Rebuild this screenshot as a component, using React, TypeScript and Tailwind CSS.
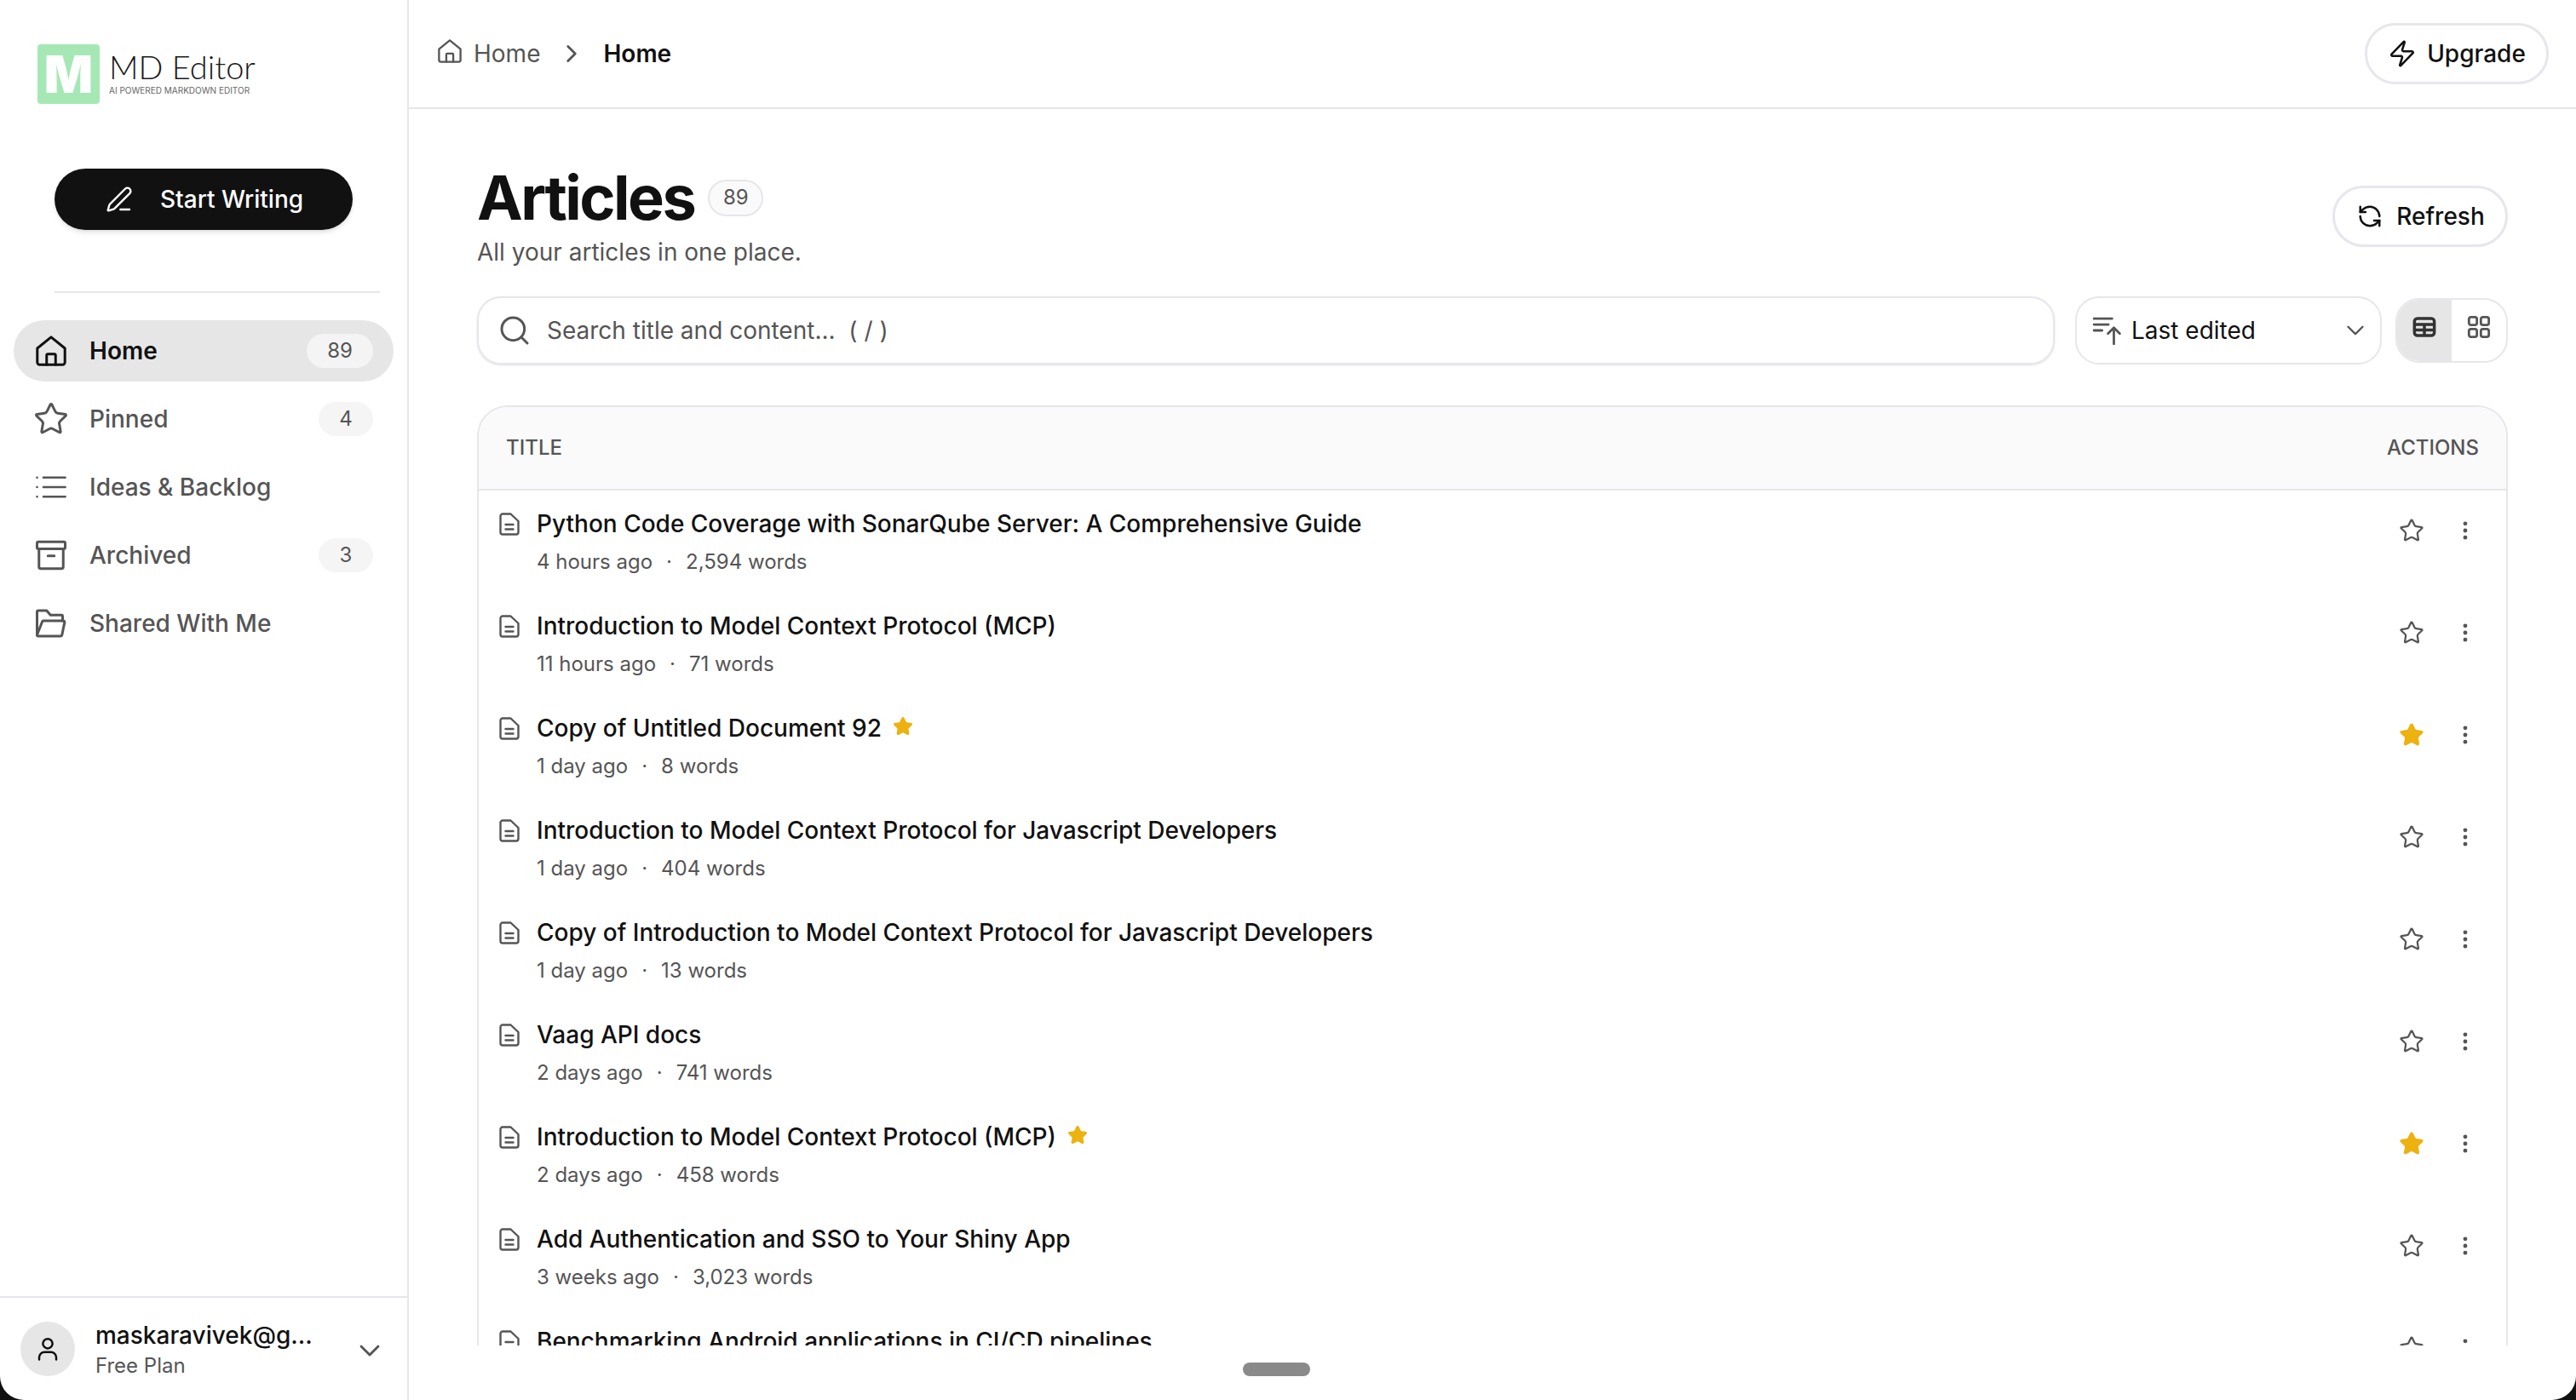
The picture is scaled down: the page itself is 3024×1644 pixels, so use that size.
import React from 'react';
import { ChevronDown, ChevronRight, EllipsisVertical, PenLine, RefreshCcw, Search, Star, Zap } from 'lucide-react';

interface Article {
  title: string;
  age?: string;
  words?: string;
  pinned?: boolean;
}

const articles: Article[] = [
  { title: 'Python Code Coverage with SonarQube Server: A Comprehensive Guide', age: '4 hours ago', words: '2,594 words' },
  { title: 'Introduction to Model Context Protocol (MCP)', age: '11 hours ago', words: '71 words' },
  { title: 'Copy of Untitled Document 92', age: '1 day ago', words: '8 words', pinned: true },
  { title: 'Introduction to Model Context Protocol for Javascript Developers', age: '1 day ago', words: '404 words' },
  { title: 'Copy of Introduction to Model Context Protocol for Javascript Developers', age: '1 day ago', words: '13 words' },
  { title: 'Vaag API docs', age: '2 days ago', words: '741 words' },
  { title: 'Introduction to Model Context Protocol (MCP)', age: '2 days ago', words: '458 words', pinned: true },
  { title: 'Add Authentication and SSO to Your Shiny App', age: '3 weeks ago', words: '3,023 words' },
  // cut off by the scroll area, only the title shows
  { title: 'Benchmarking Android applications in CI/CD pipelines' },
];

type IconProps = { className?: string };

const stroke = {
  fill: 'none',
  stroke: 'currentColor',
  strokeLinecap: 'round' as const,
  strokeLinejoin: 'round' as const,
};

const HomeIcon = ({ className }: IconProps) => (
  <svg viewBox="0 0 24 24" className={className} {...stroke} strokeWidth={2}>
    <path d="M1.2 10 12 1.2 22.8 10v11a1.8 1.8 0 0 1-1.8 1.8H3A1.8 1.8 0 0 1 1.2 21z" />
    <path d="M8.5 22.8v-7.3a1 1 0 0 1 1-1h5a1 1 0 0 1 1 1v7.3" />
  </svg>
);

const ListIcon = ({ className }: IconProps) => (
  <svg viewBox="0 0 24 24" className={className} {...stroke} strokeWidth={1.8}>
    <path d="M6 4.5h17M6 12h17M6 19.5h17M1 4.5h.01M1 12h.01M1 19.5h.01" />
  </svg>
);

const ArchiveIcon = ({ className }: IconProps) => (
  <svg viewBox="0 0 24 24" className={className} {...stroke} strokeWidth={2}>
    <rect x="1" y="1.5" width="22" height="5.5" rx="1" />
    <path d="M2.5 7v14a1.5 1.5 0 0 0 1.5 1.5h16a1.5 1.5 0 0 0 1.5-1.5V7M9.5 12.5h5" />
  </svg>
);

const FolderIcon = ({ className }: IconProps) => (
  <svg viewBox="0 0 24 24" className={className} {...stroke} strokeWidth={2}>
    <path d="M1 21V3a1 1 0 0 1 1-1h6.5l3 3.5H20a1 1 0 0 1 1 1V10" />
    <path d="M1 21a1 1 0 0 0 1 1h17.5a1 1 0 0 0 1-.8l2-9.8a1 1 0 0 0-1-1.4H6a1 1 0 0 0-1 .8z" />
  </svg>
);

const DocIcon = ({ className }: IconProps) => (
  <svg viewBox="0 0 24 27" className={className} {...stroke} strokeWidth={2.4}>
    <path d="M1.5 4a2.5 2.5 0 0 1 2.5-2.5h9.5L22.5 10v13a2.5 2.5 0 0 1-2.5 2.5H4A2.5 2.5 0 0 1 1.5 23z" />
    <path d="M7.5 14h9M7.5 19.5h9" />
  </svg>
);

const UserIcon = ({ className }: IconProps) => (
  <svg viewBox="0 0 24 24" className={className} {...stroke} strokeWidth={2}>
    <circle cx="12" cy="7" r="4.5" />
    <path d="M4 22v-2a5 5 0 0 1 5-5h6a5 5 0 0 1 5 5v2" />
  </svg>
);

const SortIcon = ({ className }: IconProps) => (
  <svg viewBox="0 0 32 32" className={className} {...stroke} strokeWidth={2.6}>
    <path d="M2 3h20M2 9.5h16M2 16h9M24 31V13M17.5 19.5 24 13l6.5 6.5" />
  </svg>
);

const TableIcon = ({ className }: IconProps) => (
  <svg viewBox="0 0 24 24" className={className} fill="none" stroke="currentColor" strokeWidth={3} strokeLinejoin="round">
    <rect x="2" y="3.5" width="20" height="17" rx="3" />
    <path d="M2 9.5h20M2 15h20M12 9.5V20" />
  </svg>
);

const GridIcon = ({ className }: IconProps) => (
  <svg viewBox="0 0 24 24" className={className} fill="none" stroke="currentColor" strokeWidth={2.4}>
    <rect x="2" y="2" width="8" height="8" rx="2" />
    <rect x="14" y="2" width="8" height="8" rx="2" />
    <rect x="2" y="14" width="8" height="8" rx="2" />
    <rect x="14" y="14" width="8" height="8" rx="2" />
  </svg>
);

const NavItem = ({ icon, label, count, active }: { icon: React.ReactNode; label: string; count?: number; active?: boolean }) => (
  <div className={`flex items-center h-[72px] rounded-full pl-[26px] pr-[24px] ${active ? 'bg-[#e6e6e6] text-[#111] font-semibold' : 'text-[#555] font-medium'}`}>
    <span className="w-[36px] h-[36px] shrink-0 flex items-center justify-center">{icon}</span>
    <span className="ml-[27px] text-[28px] flex-1">{label}</span>
    {count !== undefined && (
      <span className={`h-[40px] rounded-full flex items-center justify-center text-[24px] font-normal text-[#555] ${active ? 'w-[78px] bg-[#f4f4f4]' : 'w-[64px] bg-[#f5f5f5]'}`}>
        {count}
      </span>
    )}
  </div>
);

const ArticleRow = ({ article }: { article: Article }) => (
  <div className="h-[120px] shrink-0 flex pl-[24px] pr-[34px]">
    <DocIcon className="w-[24px] h-[27px] mt-[26px] text-[#555] shrink-0" />
    <div className="ml-[20px] flex-1 pt-[21px]">
      <div className="flex items-center h-[36px] text-[28px] font-medium text-[#111]">
        {article.title}
        {article.pinned && <Star className="w-[24px] h-[24px] ml-[13px] mb-[4px] text-[#edb20f] fill-[#edb20f]" />}
      </div>
      {article.age && (
        <div className="mt-[12px] text-[24px] leading-[30px] text-[#555]">
          {article.age}
          <span className="mx-[16px]">·</span>
          {article.words}
        </div>
      )}
    </div>
    <div className="flex items-center gap-[34px] h-[94px]">
      <Star className={`w-[30px] h-[30px] ${article.pinned ? 'text-[#edb20f] fill-[#edb20f]' : 'text-[#555]'}`} strokeWidth={1.8} />
      <EllipsisVertical className="w-[28px] h-[28px] text-[#555]" strokeWidth={2.2} />
    </div>
  </div>
);

export default function App() {
  return (
    <div className="w-[3024px] h-[1644px] bg-[#111] overflow-hidden [font-family:Inter,sans-serif]">
      <div className="relative w-full h-full bg-white rounded-b-[28px] flex overflow-hidden">
        <aside className="w-[480px] shrink-0 h-full border-r-2 border-[#e6e6ec] flex flex-col">
          <div className="h-[198px] shrink-0 pl-[44px] pt-[52px] flex items-start">
            <div className="w-[73px] h-[70px] rounded-[4px] bg-[#a5e8b5] flex items-center justify-center">
              <span className="text-[60px] leading-none font-black text-white">M</span>
            </div>
            <div className="ml-[11px] mt-[5px]">
              <div className="text-[38px] leading-[42px] font-light text-[#1a1a1a] [font-family:Lato,sans-serif]">MD Editor</div>
              <div className="text-[10px] leading-[12px] mt-[1px] text-[#666] whitespace-nowrap">AI POWERED MARKDOWN EDITOR</div>
            </div>
          </div>
          <div className="px-[64px]">
            <button className="w-[350px] h-[72px] rounded-full bg-[#111] text-white shadow-md flex items-center pl-[60px]">
              <PenLine className="w-[32px] h-[32px]" strokeWidth={1.8} />
              <span className="ml-[32px] text-[28px] font-medium">Start Writing</span>
            </button>
            <div className="mt-[72px] h-[2px] bg-[#e6e6ec] w-[382px]" />
          </div>
          <nav className="mt-[32px] px-[16px] flex flex-col gap-[8px] flex-1">
            <NavItem icon={<HomeIcon className="w-[36px] h-[36px] shrink-0" />} label="Home" count={89} active />
            <NavItem icon={<Star className="w-[42px] h-[42px] shrink-0" strokeWidth={1.7} />} label="Pinned" count={4} />
            <NavItem icon={<ListIcon className="w-[36px] h-[36px] shrink-0" />} label="Ideas & Backlog" />
            <NavItem icon={<ArchiveIcon className="w-[36px] h-[36px] shrink-0" />} label="Archived" count={3} />
            <NavItem icon={<FolderIcon className="w-[36px] h-[36px] shrink-0" />} label="Shared With Me" />
          </nav>
          <div className="h-[122px] shrink-0 border-t-2 border-[#e6e6ec] flex items-start pl-[24px] pr-[24px] pt-[28px]">
            <div className="w-[64px] h-[64px] rounded-full bg-[#e6e6e6] flex items-center justify-center text-[#111]">
              <UserIcon className="w-[30px] h-[30px]" />
            </div>
            <div className="ml-[24px] flex-1">
              <div className="text-[28px] leading-[36px] font-medium text-[#111] -mt-[2px]">maskaravivek@g...</div>
              <div className="text-[24px] leading-[30px] text-[#555] mt-[3px]">Free Plan</div>
            </div>
            <ChevronDown className="w-[40px] h-[40px] text-[#555] mt-[14px]" strokeWidth={1.7} />
          </div>
        </aside>

        <main className="flex-1 min-w-0 h-full flex flex-col pb-[64px]">
          <header className="h-[128px] shrink-0 border-b-2 border-[#e6e6ec] flex items-center pl-[34px] pr-[32px]">
            <HomeIcon className="w-[28px] h-[28px] text-[#555] mb-[6px]" />
            <span className="ml-[14px] text-[28px] text-[#555]">Home</span>
            <ChevronRight className="ml-[20px] w-[34px] h-[34px] text-[#555]" strokeWidth={2} />
            <span className="ml-[20px] text-[28px] font-semibold text-[#111]">Home</span>
            <button className="ml-auto w-[216px] h-[72px] rounded-full border-[3px] border-[#e6e6ec] flex items-center justify-center gap-[12px] text-[28px] font-medium text-[#111]">
              <Zap className="w-[34px] h-[34px]" strokeWidth={1.8} />
              Upgrade
            </button>
          </header>

          <div className="flex-1 min-h-0 overflow-hidden px-[80px] pt-[60px]">
            <div className="flex items-start">
              <div>
                <div className="flex items-center h-[88px]">
                  <h1 className="text-[72px] leading-[88px] font-bold tracking-[-0.035em] text-[#111]">Articles</h1>
                  <span className="ml-[16px] w-[65px] h-[43px] rounded-full border-2 border-[#e6e6ec] bg-[#fafafa] flex items-center justify-center text-[24px] text-[#555]">89</span>
                </div>
                <p className="mt-[3px] text-[28px] leading-[34px] text-[#555]">All your articles in one place.</p>
              </div>
              <button className="ml-auto mt-[30px] w-[206px] h-[72px] rounded-full border-[3px] border-[#e6e6ec] flex items-center justify-center gap-[16px] pl-[2px] text-[28px] font-medium text-[#111]">
                <RefreshCcw className="w-[30px] h-[30px]" strokeWidth={2} />
                Refresh
              </button>
            </div>

            <div className="mt-[35px] flex items-center gap-[24px] h-[80px]">
              <div className="flex-1 h-[80px] rounded-[28px] border-2 border-[#e6e6ec] shadow-sm flex items-center pl-[22px]">
                <Search className="w-[40px] h-[40px] text-[#555]" strokeWidth={1.8} />
                <input
                  placeholder="Search title and content...  ( / )"
                  className="ml-[18px] flex-1 text-[28px] outline-none bg-transparent placeholder:text-[#555]"
                />
              </div>
              <div className="w-[360px] h-[80px] rounded-[28px] border-2 border-[#e6e6ec] flex items-center pl-[18px] pr-[12px]">
                <SortIcon className="w-[34px] h-[34px] text-[#555]" />
                <span className="ml-[12px] text-[28px] text-[#111] flex-1">Last edited</span>
                <ChevronDown className="w-[34px] h-[34px] text-[#555]" strokeWidth={1.7} />
              </div>
              <div className="w-[132px] h-[76px] shrink-0 ml-[-8px] rounded-[28px] border-2 border-[#e6e6ec] flex overflow-hidden">
                <div className="w-[64px] bg-[#e6e6e6] flex items-center justify-center text-[#333]">
                  <TableIcon className="w-[28px] h-[28px] mb-[8px]" />
                </div>
                <div className="flex-1 flex items-center justify-center text-[#555]">
                  <GridIcon className="w-[28px] h-[28px] mb-[8px]" />
                </div>
              </div>
            </div>

            <div className="mt-[48px] rounded-t-[36px] border-2 border-[#e6e6ec]">
              <div className="h-[98px] rounded-t-[34px] bg-[#fafafa] border-b-2 border-[#e6e6ec] flex items-center justify-between px-[32px] text-[24px] font-medium text-[#555]">
                <span>TITLE</span>
                <span>ACTIONS</span>
              </div>
              {articles.map((article, i) => (
                <ArticleRow key={i} article={article} />
              ))}
            </div>
          </div>
        </main>

        <div className="absolute left-[1459px] top-[1600px] w-[79px] h-[16px] rounded-full bg-[#8a8a8a]" />
      </div>
    </div>
  );
}
